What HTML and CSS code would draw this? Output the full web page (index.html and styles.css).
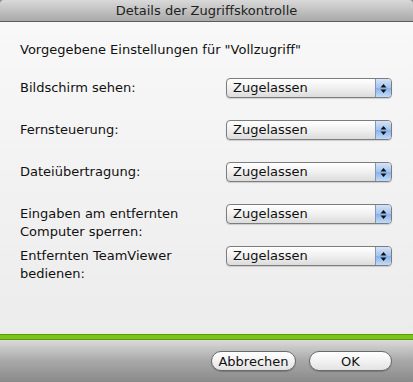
FILE: index.html
```html
<html>
<head>
  <title>Details der Zugriffskontrolle</title>
  <link rel="stylesheet" href="styles.css">
</head>
<body>
  <div class="window">
    <div class="titlebar">Details der Zugriffskontrolle</div>

    <div class="content">
      <p class="intro">Vorgegebene Einstellungen für "Vollzugriff"</p>

      <div class="rows">
        <div class="label">Bildschirm sehen:</div>
        <div class="popup"><span>Zugelassen</span><i class="arrows"><svg width="7" height="11" viewBox="0 0 7 11"><path d="M3.5 1 L6.5 4.5 H0.5 Z M3.5 10 L6.5 6.5 H0.5 Z" fill="#111"/></svg></i></div>

        <div class="label">Fernsteuerung:</div>
        <div class="popup"><span>Zugelassen</span><i class="arrows"><svg width="7" height="11" viewBox="0 0 7 11"><path d="M3.5 1 L6.5 4.5 H0.5 Z M3.5 10 L6.5 6.5 H0.5 Z" fill="#111"/></svg></i></div>

        <div class="label">Dateiübertragung:</div>
        <div class="popup"><span>Zugelassen</span><i class="arrows"><svg width="7" height="11" viewBox="0 0 7 11"><path d="M3.5 1 L6.5 4.5 H0.5 Z M3.5 10 L6.5 6.5 H0.5 Z" fill="#111"/></svg></i></div>

        <div class="label">Eingaben am entfernten<br>Computer sperren:</div>
        <div class="popup"><span>Zugelassen</span><i class="arrows"><svg width="7" height="11" viewBox="0 0 7 11"><path d="M3.5 1 L6.5 4.5 H0.5 Z M3.5 10 L6.5 6.5 H0.5 Z" fill="#111"/></svg></i></div>

        <div class="label">Entfernten TeamViewer<br>bedienen:</div>
        <div class="popup"><span>Zugelassen</span><i class="arrows"><svg width="7" height="11" viewBox="0 0 7 11"><path d="M3.5 1 L6.5 4.5 H0.5 Z M3.5 10 L6.5 6.5 H0.5 Z" fill="#111"/></svg></i></div>
      </div>
    </div>

    <div class="separator"></div>

    <div class="buttonbar">
      <button class="btn btn-cancel">Abbrechen</button>
      <button class="btn btn-ok">OK</button>
    </div>
  </div>
</body>
</html>
```

FILE: styles.css
```css
body {
  margin: 0;
  padding: 0;
  font-family: "DejaVu Sans", "Liberation Sans", sans-serif;
  font-size: 13px;
  color: #111;
  background-color: #8a8a8a;
}
.window {
  width: 413px;
  height: 382px;
  display: flex;
  flex-direction: column;
  overflow: hidden;
}
.titlebar {
  height: 21px;
  line-height: 22px;
  text-align: center;
  color: #222;
  background: linear-gradient(#d9d9d9, #a9a9a9);
  border-bottom: 1px solid #5c5c5c;
  border-radius: 4px 4px 0 0;
  flex-shrink: 0;
}
.content {
  flex: 1;
  padding: 20px 0 0 20px;
  background: linear-gradient(#f8f8f8, #ececec);
}
.intro {
  margin: 0 0 20px 0;
  line-height: 16px;
}
.rows {
  display: grid;
  grid-template-columns: 206px 166px;
  grid-auto-rows: 42px;
  align-items: start;
}
.label {
  padding-top: 1px;
  line-height: 18px;
}
.popup {
  height: 18px;
  display: flex;
  align-items: center;
  border: 1px solid #7d7d7d;
  border-radius: 4px;
  background: linear-gradient(#ffffff, #f0f0f0 50%, #dcdcdc);
  box-shadow: 0 1px 1px rgba(0, 0, 0, 0.15);
  overflow: hidden;
}
.popup span {
  flex: 1;
  padding-left: 6px;
  line-height: 18px;
}
.arrows {
  width: 15px;
  height: 18px;
  display: flex;
  align-items: center;
  justify-content: center;
  border-left: 1px solid #8796ad;
  background: linear-gradient(#d4e4f8, #a3c3ee 50%, #86b2ec 51%, #c3dbf8);
}
.separator {
  height: 4px;
  flex-shrink: 0;
  background: #7cc31e;
  border-top: 1px solid #529c00;
  border-bottom: 1px solid #559a10;
}
.buttonbar {
  height: 42px;
  flex-shrink: 0;
  display: flex;
  justify-content: flex-end;
  align-items: flex-start;
  gap: 13px;
  padding: 11px 21px 0 0;
  box-sizing: border-box;
  background: linear-gradient(#dadada, #a8a8a8 50%, #8a8a8a);
}
.btn {
  height: 20px;
  padding: 0;
  font-family: "DejaVu Sans", "Liberation Sans", sans-serif;
  font-size: 13px;
  color: #111;
  border: 1px solid #6a6a6a;
  border-radius: 10px;
  background: linear-gradient(#ffffff, #f2f2f2 50%, #e2e2e2);
  box-shadow: 0 1px 1px rgba(0, 0, 0, 0.2);
}
.btn-cancel {
  width: 85px;
}
.btn-ok {
  width: 83px;
}
```
